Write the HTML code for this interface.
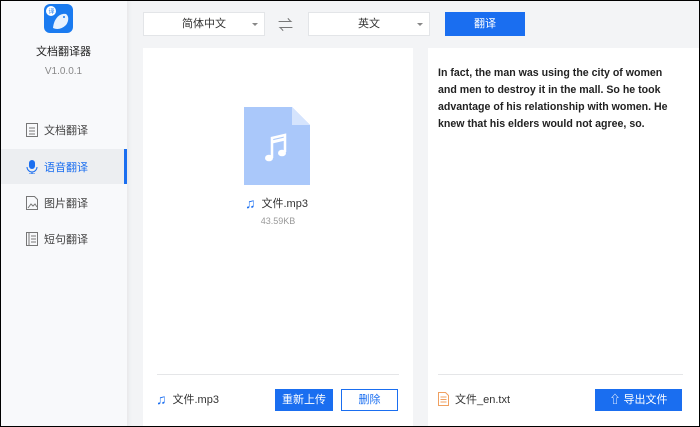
<!DOCTYPE html><html><head><meta charset="utf-8"><style>
*{margin:0;padding:0;box-sizing:border-box}
body{width:700px;height:427px;overflow:hidden;font-family:"Liberation Sans","Noto Sans CJK SC",sans-serif;background:#f3f4f6;position:relative;font-size:11px;color:#333}
.frame{position:absolute;left:0;top:0;width:700px;height:427px;border:1px solid #000;pointer-events:none;z-index:10}
.side{position:absolute;left:0;top:0;width:127px;height:427px;background:#f8f9fb;box-shadow:2px 0 4px rgba(0,0,0,.05)}
.abs{position:absolute}
.sel{position:absolute;top:12px;height:24px;background:#fff;border:1px solid #e3e5e8;text-align:center;line-height:22px;font-size:11px;color:#333}
.sel:after{content:"";position:absolute;right:6px;top:10px;border:3px solid transparent;border-top:3px solid #888}
.btn{position:absolute;background:#1a6ef0;color:#fff;text-align:center;font-size:11px}
.panel{position:absolute;top:48px;height:379px;background:#fff}
.mi{position:absolute;left:26px;font-size:11px;color:#444;display:flex;align-items:center;gap:6px}
</style></head><body>
<div class="side">
 <div class="abs" style="left:44px;top:4px;width:29px;height:29px;border-radius:6px;background:#1a7bf0">
  <svg width="29" height="29"><circle cx="7" cy="7" r="5" fill="#fff"/><text x="4.5" y="9.5" font-size="6" fill="#1a7bf0" font-family="Noto Sans CJK SC">译</text><path d="M9 24 C10 14 16 9 22 10 C25 12 25 17 22 21 C18 25 13 26 9 24Z" fill="#fff" opacity=".9"/><circle cx="20" cy="13" r="1" fill="#1a7bf0"/></svg>
 </div>
 <div class="abs" style="left:0;width:127px;top:43px;text-align:center;font-size:11px;color:#222">文档翻译器</div>
 <div class="abs" style="left:0;width:127px;top:66px;text-align:center;font-size:10px;color:#888">V1.0.0.1</div>
 <div class="abs" style="left:0;top:149px;width:127px;height:35px;background:#eceef1"></div>
 <div class="abs" style="left:124px;top:149px;width:3px;height:35px;background:#1a6ef0"></div>
 <div class="mi" style="top:122px"><svg width="12" height="14"><rect x=".5" y=".5" width="11" height="13" fill="none" stroke="#777"/><path d="M3 5h6M3 8h6M3 11h6" stroke="#777"/></svg>文档翻译</div>
 <div class="mi" style="top:159px;color:#1a6ef0"><svg width="12" height="14"><rect x="3" y="0" width="6" height="9" rx="3" fill="#1a6ef0"/><path d="M1 7a5 5 0 0 0 10 0M6 12v2M3 14h6" stroke="#1a6ef0" fill="none"/></svg>语音翻译</div>
 <div class="mi" style="top:195px"><svg width="12" height="14"><path d="M.5.5h8l3 3v10h-11z" fill="none" stroke="#777"/><path d="M2 12l3-4 2 2 2-2 2 3" stroke="#777" fill="none"/></svg>图片翻译</div>
 <div class="mi" style="top:231px"><svg width="12" height="14"><rect x=".5" y=".5" width="11" height="13" fill="none" stroke="#777"/><path d="M3 .5v13M5 4h5M5 7h5M5 10h5" stroke="#777"/></svg>短句翻译</div>
</div>
<div class="sel" style="left:143px;width:122px">简体中文</div>
<div class="abs" style="left:278px;top:14px;font-size:15px;color:#777">⇌</div>
<div class="sel" style="left:308px;width:122px">英文</div>
<div class="btn" style="left:445px;top:12px;width:80px;height:24px;line-height:24px">翻译</div>
<div class="panel" style="left:143px;width:270px">
 <svg class="abs" style="left:101px;top:59px" width="66" height="78"><path d="M0 0h48l18 18v60h-66z" fill="#aac8fa"/><path d="M48 0l18 18h-18z" fill="#d5e4fd"/><path d="M28 51V31l13-3v17" stroke="#fff" stroke-width="2.5" fill="none"/><path d="M28 35l13-3" stroke="#fff" stroke-width="3"/><ellipse cx="25" cy="51" rx="4" ry="3.3" fill="#fff"/><ellipse cx="38" cy="46" rx="4" ry="3.3" fill="#fff"/></svg>
 <div class="abs" style="left:102px;top:147px;font-size:11px;color:#333;display:flex;gap:6px;align-items:center"><span style="color:#1a6ef0;font-size:14px;font-weight:bold">♫</span>文件.mp3</div>
 <div class="abs" style="left:0;width:270px;top:168px;text-align:center;font-size:9px;color:#999">43.59KB</div>
 <div class="abs" style="left:14px;top:326px;width:242px;height:1px;background:#e5e6e8"></div>
 <div class="abs" style="left:13px;top:343px;font-size:11px;display:flex;gap:6px;align-items:center"><span style="color:#1a6ef0;font-size:14px;font-weight:bold">♫</span>文件.mp3</div>
 <div class="btn" style="left:132px;top:341px;width:58px;height:22px;line-height:22px">重新上传</div>
 <div class="abs" style="left:198px;top:341px;width:57px;height:22px;line-height:20px;border:1px solid #1a6ef0;color:#1a6ef0;text-align:center">删除</div>
</div>
<div class="panel" style="left:428px;width:271px">
 <div class="abs" style="left:10px;top:17px;white-space:nowrap;font-weight:bold;font-size:10.6px;line-height:17px;color:#222;font-family:'Liberation Sans',sans-serif">In fact, the man was using the city of women<br>and men to destroy it in the mall. So he took<br>advantage of his relationship with women. He<br>knew that his elders would not agree, so.</div>
 <div class="abs" style="left:10px;top:326px;width:245px;height:1px;background:#e5e6e8"></div>
 <div class="abs" style="left:10px;top:343px;display:flex;gap:6px;align-items:center;font-size:11px"><svg width="11" height="14"><path d="M.5.5h7l3 3v10h-10z" fill="none" stroke="#f0a060"/><path d="M2.5 5h6M2.5 7.5h6M2.5 10h6" stroke="#f0a060"/></svg>文件_en.txt</div>
 <div class="btn" style="left:167px;top:341px;width:87px;height:22px;line-height:22px">⇧ 导出文件</div>
</div>
<div class="frame"></div>
</body></html>
